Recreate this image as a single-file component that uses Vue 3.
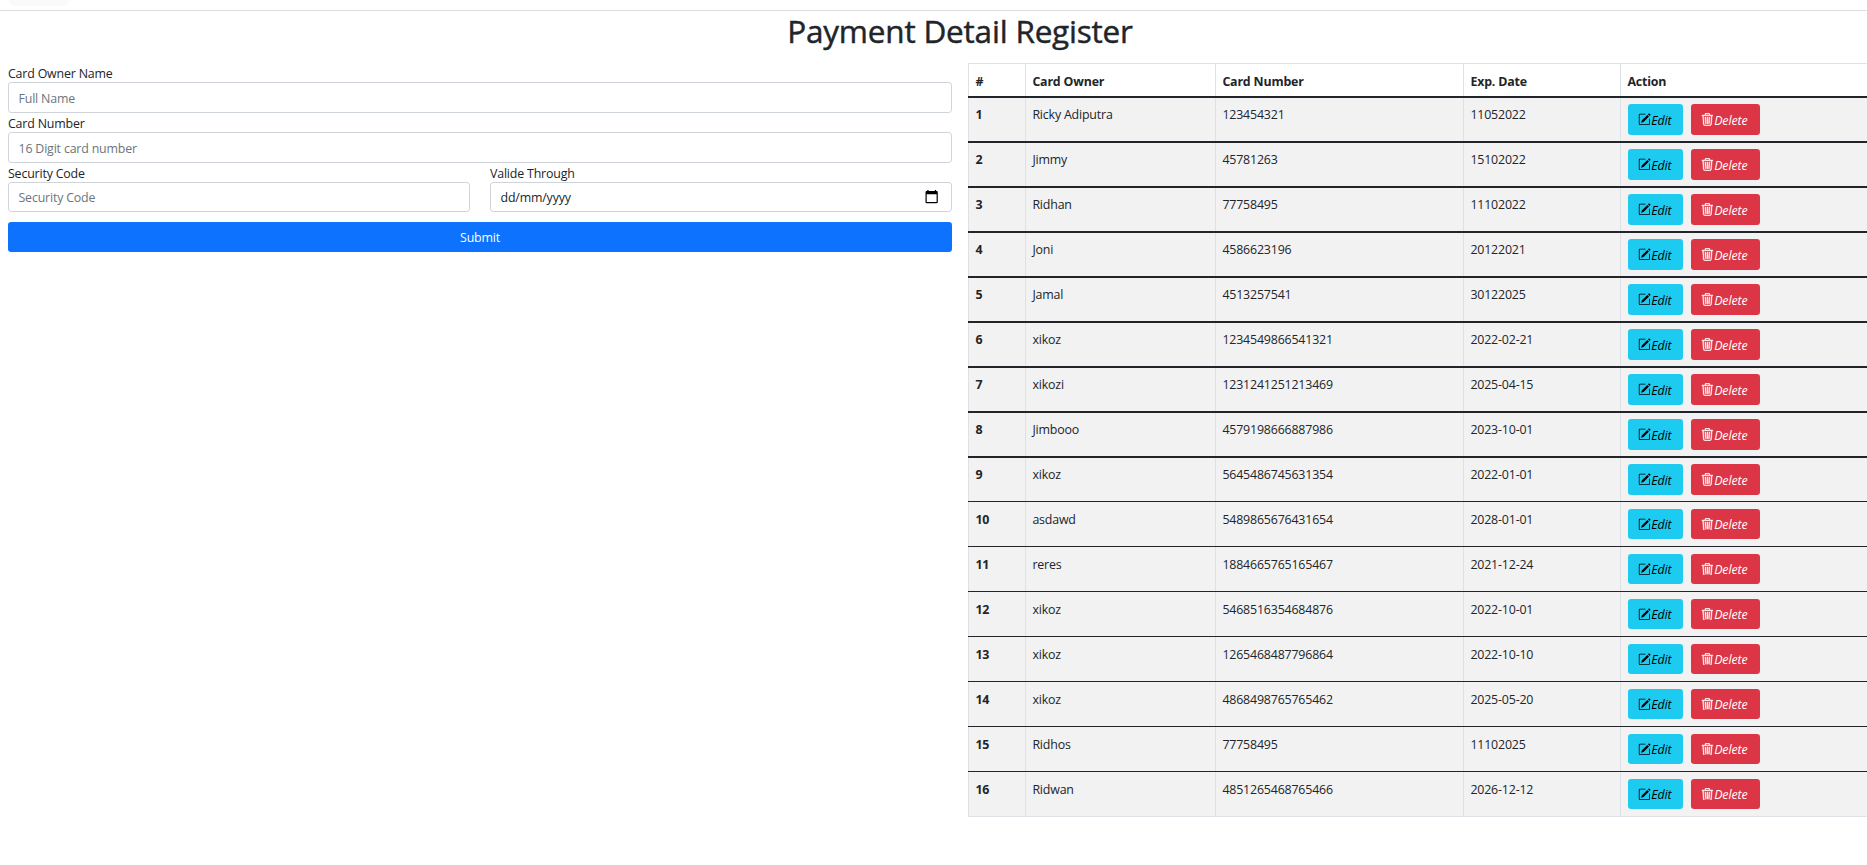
<script setup>
const rows = [
  ['Ricky Adiputra', '123454321', '11052022'],
  ['Jimmy', '45781263', '15102022'],
  ['Ridhan', '77758495', '11102022'],
  ['Joni', '4586623196', '20122021'],
  ['Jamal', '4513257541', '30122025'],
  ['xikoz', '1234549866541321', '2022-02-21'],
  ['xikozi', '1231241251213469', '2025-04-15'],
  ['Jimbooo', '4579198666887986', '2023-10-01'],
  ['xikoz', '5645486745631354', '2022-01-01'],
  ['asdawd', '5489865676431654', '2028-01-01'],
  ['reres', '1884665765165467', '2021-12-24'],
  ['xikoz', '5468516354684876', '2022-10-01'],
  ['xikoz', '1265468487796864', '2022-10-10'],
  ['xikoz', '4868498765765462', '2025-05-20'],
  ['Ridhos', '77758495', '11102025'],
  ['Ridwan', '4851265468765466', '2026-12-12'],
]
</script>

<template>
  <div class="page">
    <div class="canvas">
      <header class="navbar"><div class="toggler"></div></header>
      <h1>Payment Detail Register</h1>
      <main class="columns">
        <form class="form" @submit.prevent>
          <label for="owner">Card Owner Name</label>
          <input id="owner" type="text" placeholder="Full Name" />
          <label for="number">Card Number</label>
          <input id="number" type="text" placeholder="16 Digit card number" />
          <div class="pair">
            <div class="field">
              <label for="code">Security Code</label>
              <input id="code" class="short" type="text" placeholder="Security Code" />
            </div>
            <div class="field">
              <label>Valide Through</label>
              <div class="date short">
                <span>dd/mm/yyyy</span>
                <svg width="14" height="14" viewBox="0 0 14 14">
                  <path fill="#000" fill-rule="evenodd" d="M2.3 0H3.6V1H9.8V0H11.1V1H11.6Q12.8 1 12.8 2.2V12Q12.8 13.2 11.6 13.2H1.7Q.5 13.2 .5 12V2.2Q.5 1 1.7 1H2.3ZM1.7 4.2V12H11.6V4.2Z" />
                </svg>
              </div>
            </div>
          </div>
          <button class="submit" type="submit">Submit</button>
        </form>

        <table>
          <colgroup>
            <col class="c1" /><col class="c2" /><col class="c3" /><col class="c4" /><col class="c5" />
          </colgroup>
          <thead>
            <tr><th>#</th><th>Card Owner</th><th>Card Number</th><th>Exp. Date</th><th>Action</th></tr>
          </thead>
          <tbody>
            <tr v-for="(r, i) in rows" :key="i" :class="{ thick: i < 8, ninth: i === 8, thin: i > 8, last: i === 15 }">
              <th>{{ i + 1 }}</th>
              <td>{{ r[0] }}</td>
              <td>{{ r[1] }}</td>
              <td>{{ r[2] }}</td>
              <td class="action-cell">
                <div class="actions">
                  <button class="btn edit" type="button">
                    <svg width="12.8" height="12.8" viewBox="0 0 16 16" fill="currentColor">
                      <path d="M15.502 1.94a.5.5 0 0 1 0 .706L14.459 3.69l-2-2L13.502.646a.5.5 0 0 1 .707 0l1.293 1.293zm-1.75 2.456-2-2L4.939 9.21a.5.5 0 0 0-.121.196l-.805 2.414a.25.25 0 0 0 .316.316l2.414-.805a.5.5 0 0 0 .196-.12l6.813-6.814z" />
                      <path fill-rule="evenodd" d="M1 13.5A1.5 1.5 0 0 0 2.5 15h11a1.5 1.5 0 0 0 1.5-1.5v-6a.5.5 0 0 0-1 0v6a.5.5 0 0 1-.5.5h-11a.5.5 0 0 1-.5-.5v-11a.5.5 0 0 1 .5-.5H9a.5.5 0 0 0 0-1H2.5A1.5 1.5 0 0 0 1 2.5v11z" />
                    </svg><i>Edit</i>
                  </button>
                  <button class="btn delete" type="button">
                    <svg width="12.8" height="12.8" viewBox="0 0 16 16" fill="currentColor" stroke="currentColor" stroke-width="0.5">
                      <path d="M11 1.5v1h3.5a.5.5 0 0 1 0 1h-.538l-.853 10.66A2 2 0 0 1 11.115 16h-6.23a2 2 0 0 1-1.994-1.84L2.038 3.5H1.5a.5.5 0 0 1 0-1H5v-1A1.5 1.5 0 0 1 6.5 0h3A1.5 1.5 0 0 1 11 1.5Zm-5 0v1h4v-1a.5.5 0 0 0-.5-.5h-3a.5.5 0 0 0-.5.5ZM3.04 3.5l.846 10.58a1 1 0 0 0 .997.92h6.23a1 1 0 0 0 .997-.92l.846-10.58H3.04ZM5.5 5h.6l.5 8.5h-1L5 5.500ZM7.5 5h1v8.500h-1ZM10 5h1l-.5 8.500h-1Z" />
                    </svg><i>Delete</i>
                  </button>
                </div>
              </td>
            </tr>
          </tbody>
        </table>
      </main>
    </div>
  </div>
</template>

<style>
body {
  background: #fff;
}
</style>

<style scoped>
* {
  box-sizing: border-box;
}
.page {
  width: 100%;
  height: 865px;
  overflow: hidden;
  font-family: "Open Sans", "Noto Sans", sans-serif;
  font-size: 12.4px;
  letter-spacing: -0.18px;
  line-height: 19px;
  color: #212529;
}
.canvas {
  width: 1920px;
}
.navbar {
  height: 11px;
  padding-left: 9px;
  border-bottom: 1px solid #dcdcdf;
}
.toggler {
  width: 60px;
  height: 6px;
  border-radius: 0 0 10px 10px;
  background: #fafafa;
}
h1 {
  height: 38px;
  margin: 1px 0 13px;
  font-size: 31.5px;
  line-height: 38px;
  font-weight: 500;
  letter-spacing: -0.2px;
  -webkit-text-stroke: 0.45px #212529;
  text-align: center;
}
.columns {
  display: flex;
  gap: 16px;
  padding: 0 8px;
  align-items: flex-start;
}
.form {
  width: 944px;
  display: flex;
  flex-direction: column;
}
label {
  display: block;
  height: 19px;
  padding-top: 1px;
  line-height: 18px;
  line-height: 19px;
}
input,
.date {
  display: block;
  width: 100%;
  height: 31px;
  margin: 0;
  padding: 1px 9.5px 0;
  border: 1px solid #ced4da;
  border-radius: 3.2px;
  background: #fff;
  color: #212529;
  font: inherit;
  letter-spacing: inherit;
}
input::placeholder {
  color: #6c757d;
  opacity: 1;
}
.short {
  height: 30px;
}
.date {
  display: flex;
  align-items: center;
  justify-content: space-between;
  padding-right: 12.5px;
}
.date svg {
  margin-top: -2px;
}
.pair {
  display: grid;
  grid-template-columns: 1fr 1fr;
  gap: 20px;
}
.submit {
  height: 30px;
  margin-top: 10px;
  padding: 0;
  border: 0;
  border-radius: 3.2px;
  background: #0d72fd;
  color: #fff;
  font: inherit;
  letter-spacing: inherit;
}
table {
  width: 944px;
  table-layout: fixed;
  border-spacing: 0;
}
.c1 { width: 57px; }
.c2 { width: 190px; }
.c3 { width: 248px; }
.c4 { width: 157px; }
.c5 { width: 292px; }
th,
td {
  height: 45px;
  padding: 8px 0 0 7.4px;
  vertical-align: top;
  text-align: left;
  background: #f2f2f2;
  box-shadow: inset 0 -1px #212529, inset 1px 0 #dee2e6;
}
th {
  font-weight: 700;
}
thead th {
  height: 35px;
  padding-top: 9px;
  background: #fff;
  box-shadow: inset 0 -2px #212529, inset 1px 1px #dee2e6;
}
.thick > *,
.ninth > * {
  padding-top: 7px;
}
.thick > * {
  box-shadow: inset 0 -2px #212529, inset 1px 0 #dee2e6;
}
.ninth > * {
  height: 44px;
}
.last > * {
  box-shadow: inset 1px -1px #dee2e6;
}
.action-cell {
  padding: 7px 0 0 8px;
}
.thick > .action-cell,
.ninth > .action-cell {
  padding-top: 6px;
}
.actions {
  display: flex;
  gap: 8px;
}
.btn {
  display: flex;
  align-items: center;
  height: 31px;
  padding: 1px 0 0 10.4px;
  border: 0;
  border-radius: 3.2px;
  font: inherit;
  letter-spacing: -0.1px;
}
.thin .btn {
  height: 30px;
}
.btn svg {
  flex: none;
  margin-top: -1px;
}
.edit {
  width: 55px;
  background: #1ecbf0;
  color: #000;
}
.delete {
  width: 69px;
  background: #dc3545;
  color: #fff;
}
</style>
